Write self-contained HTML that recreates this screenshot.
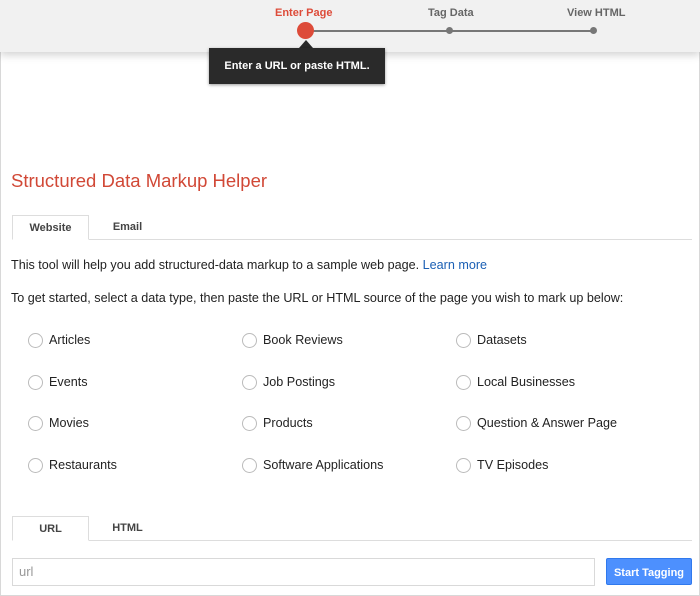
<!DOCTYPE html>
<html><head><style>
body{margin:0;width:700px;height:596px;overflow:hidden;font-family:"Liberation Sans",Arial,sans-serif;background:#fff;position:relative}
.frame{position:absolute;left:0;top:0;width:698px;height:594px;border:1px solid #d8d8d8}
.top{position:absolute;left:0;top:0;width:700px;height:52px;background:#f1f1f1;box-shadow:0 3px 8px rgba(0,0,0,.18)}
.step{position:absolute;top:7px;font-size:11px;font-weight:bold;color:#666}
.line{position:absolute;left:306px;top:30px;width:288px;height:2px;background:#777}
.dot{position:absolute;width:7px;height:7px;border-radius:50%;background:#777;top:27px}
.big{position:absolute;left:297px;top:22px;width:17px;height:17px;border-radius:50%;background:#dd4b39}
.tip{position:absolute;left:209px;top:48px;width:176px;height:36px;background:#2a2a2a;color:#fff;font-size:11px;font-weight:bold;line-height:36px;text-align:center;box-shadow:0 1px 3px rgba(0,0,0,.4)}
.arrow{position:absolute;left:299px;top:40px;width:0;height:0;border-left:7px solid transparent;border-right:7px solid transparent;border-bottom:8px solid #2a2a2a}
h1{position:absolute;left:11px;top:170px;margin:0;font-weight:normal;font-size:18.5px;color:#d14836}
.tabs{position:absolute;left:12px;width:680px;height:24px;border-bottom:1px solid #ddd}
.tab{position:absolute;top:0;height:24px;width:77px;text-align:center;font-size:11px;font-weight:bold;color:#444;line-height:24px;box-sizing:border-box}
.tab.on{border:1px solid #ddd;border-bottom:1px solid #fff;background:#fff;height:25px}
p{position:absolute;left:11px;margin:0;font-size:12.6px;color:#222}
a{color:#1a5fb4;text-decoration:none}
.r{position:absolute;font-size:12.6px;color:#222}
.r:before{content:"";position:absolute;left:-21px;top:0;width:13px;height:13px;border:1px solid #bbb;border-radius:50%}
.inp{position:absolute;left:12px;top:558px;width:583px;height:28px;border:1px solid #d9d9d9;box-sizing:border-box;font-size:13px;color:#999;line-height:26px;padding-left:6px}
.btn{position:absolute;left:606px;top:558px;width:86px;height:27px;background:#4d90fe;border:1px solid #3079ed;box-sizing:border-box;border-radius:2px;color:#fff;font-size:11px;font-weight:bold;text-align:center;line-height:28px}
</style></head><body>
<div class="frame"></div>
<div class="top"></div>
<div class="step" style="left:275px;color:#dd4b39">Enter Page</div>
<div class="step" style="left:428px">Tag Data</div>
<div class="step" style="left:567px">View HTML</div>
<div class="line"></div>
<div class="dot" style="left:446px"></div>
<div class="dot" style="left:590px"></div>
<div class="big"></div>
<div class="arrow"></div>
<div class="tip">Enter a URL or paste HTML.</div>
<h1>Structured Data Markup Helper</h1>
<div class="tabs" style="top:215px"><div class="tab on" style="left:0">Website</div><div class="tab" style="left:77px">Email</div></div>
<p style="top:258px">This tool will help you add structured-data markup to a sample web page. <a>Learn more</a></p>
<p style="top:291px">To get started, select a data type, then paste the URL or HTML source of the page you wish to mark up below:</p>
<div class="r" style="left:49px;top:333px">Articles</div>
<div class="r" style="left:263px;top:333px">Book Reviews</div>
<div class="r" style="left:477px;top:333px">Datasets</div>
<div class="r" style="left:49px;top:375px">Events</div>
<div class="r" style="left:263px;top:375px">Job Postings</div>
<div class="r" style="left:477px;top:375px">Local Businesses</div>
<div class="r" style="left:49px;top:416px">Movies</div>
<div class="r" style="left:263px;top:416px">Products</div>
<div class="r" style="left:477px;top:416px">Question &amp; Answer Page</div>
<div class="r" style="left:49px;top:458px">Restaurants</div>
<div class="r" style="left:263px;top:458px">Software Applications</div>
<div class="r" style="left:477px;top:458px">TV Episodes</div>
<div class="tabs" style="top:516px"><div class="tab on" style="left:0">URL</div><div class="tab" style="left:77px">HTML</div></div>
<div class="inp">url</div>
<div class="btn">Start Tagging</div>
</body></html>
